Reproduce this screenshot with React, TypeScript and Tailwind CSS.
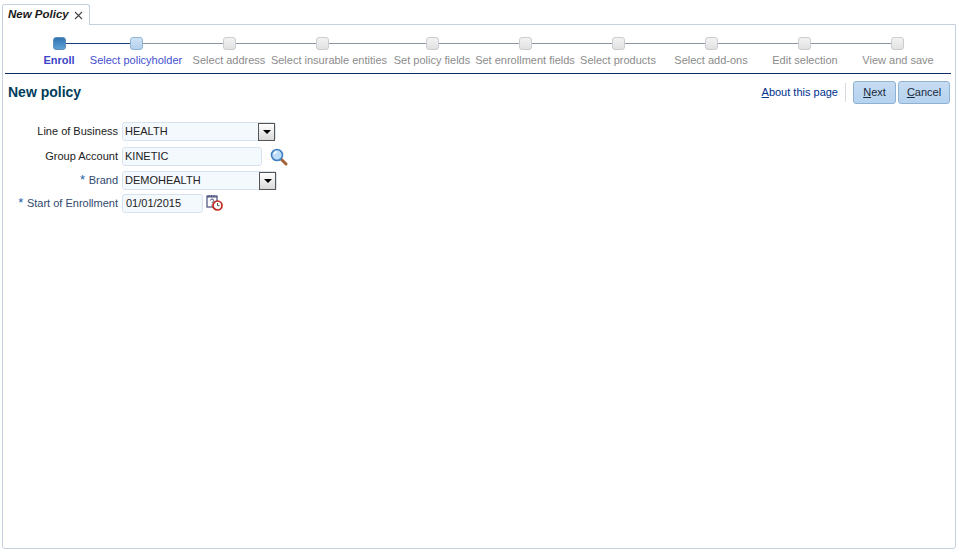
const font = "font-['Liberation_Sans',Arial,sans-serif]";

const grey = 'border-[#c9ccd0] bg-gradient-to-b from-[#f2f2f2] to-[#e2e2e2]';

// node state: done = dark blue, current = light blue, rest = grey
const steps = [
  { label: 'Enroll', line: 'w-[64px] bg-[#1c3f7c]', node: 'border-[#5f8fb8] bg-gradient-to-b from-[#2f74b0] to-[#5fa0d6]', text: 'w-[130px] ml-[-11px] text-[#3c46c8] font-bold' },
  { label: 'Select policyholder', line: 'w-[80px] bg-[#8b93a5]', node: 'border-[#90b4d4] bg-gradient-to-b from-[#cfe2f5] to-[#b3d1ee]', text: 'w-[130px] ml-[-53px] text-[#3f4fd0]' },
  { label: 'Select address', line: 'w-[80px] bg-[#8b93a5]', node: grey, text: 'w-[100px] ml-[-22px] text-[#8c8c8c]' },
  { label: 'Select insurable entities', line: 'w-[97px] bg-[#8b93a5]', node: grey, text: 'w-[130px] ml-[-15px] text-[#8c8c8c]' },
  { label: 'Set policy fields', line: 'w-[80px] bg-[#8b93a5]', node: grey, text: 'w-[100px] ml-[-12px] text-[#8c8c8c]' },
  { label: 'Set enrollment fields', line: 'w-[80px] bg-[#8b93a5]', node: grey, text: 'w-[110px] ml-[-12px] text-[#8c8c8c]' },
  { label: 'Select products', line: 'w-[80px] bg-[#8b93a5]', node: grey, text: 'w-[90px] ml-[-7px] text-[#8c8c8c]' },
  { label: 'Select add-ons', line: 'w-[80px] bg-[#8b93a5]', node: grey, text: 'w-[90px] ml-[3px] text-[#8c8c8c]' },
  { label: 'Edit selection', line: 'w-[80px] bg-[#8b93a5]', node: grey, text: 'w-[90px] ml-[4px] text-[#8c8c8c]' },
  { label: 'View and save', line: '', node: grey, text: 'w-[90px] ml-[3px] text-[#8c8c8c]' },
];

const SelectBox = ({ value, width }: { value: string; width: string }) => (
  <div className={`${width} h-[19px] flex items-center justify-between rounded-[3px] border border-[#d6e3ef] bg-[#f4f9fd] pl-[2px]`}>
    <span>{value}</span>
    <span className="flex h-[18px] w-[17px] items-center justify-center border border-[#555] bg-gradient-to-b from-white to-[#d9d9d9]">
      <span className="h-0 w-0 border-x-[4px] border-t-[4px] border-x-transparent border-t-black" />
    </span>
  </div>
);

const Label = ({ text, required }: { text: string; required?: boolean }) => (
  <div className={`w-[113px] whitespace-nowrap text-right ${required ? 'text-[#2f4a6d]' : 'text-[#222]'}`}>
    {required && <span className="text-[13px] leading-none text-[#1a5fa8]">* </span>}
    {text}
  </div>
);

const SearchIcon = () => (
  <svg width="18" height="18" viewBox="0 0 18 18">
    <line x1="10.5" y1="10.5" x2="16" y2="16" stroke="#a5623a" strokeWidth="3" strokeLinecap="round" />
    <circle cx="7" cy="7" r="5.5" fill="#bcdcf7" stroke="#3f7fc0" strokeWidth="1.6" />
    <path d="M4 6.5a3.2 3.2 0 0 1 3-2.6" fill="none" stroke="#fff" strokeWidth="1.2" />
  </svg>
);

const CalendarIcon = () => (
  <svg width="17" height="17" viewBox="0 0 17 17">
    <rect x="1" y="2" width="10" height="11" fill="#fff" stroke="#4a4f7c" strokeWidth="1.2" />
    <path d="M1 3h10M3 1v2M5.5 1v2M8 1v2" stroke="#4a4f7c" strokeWidth="1" />
    <path d="M4.5 6.5a1.6 1.6 0 1 1 2 1.6c-.5.2-.6.5-.6 1M5.9 10.5v1" fill="none" stroke="#4a4f7c" strokeWidth="1" />
    <circle cx="11.5" cy="11.5" r="4.5" fill="#fff" stroke="#c0261c" strokeWidth="1.7" />
    <path d="M11.5 9v2.7h2" fill="none" stroke="#555" strokeWidth="1" />
  </svg>
);

export default function App() {
  return (
    <div className={`${font} flex h-[552px] w-[959px] flex-col bg-white px-[2px] pt-[4px] text-[11px] text-[#222]`}>
      {/* tab */}
      <div className="relative z-10 -mb-px flex h-[21px] w-[88px] items-center gap-[5px] rounded-t-[3px] border border-b-0 border-[#c4d2e0] bg-white pl-[5px] text-[11.5px] font-bold italic text-[#1a1a1a]">
        New Policy
        <svg width="9" height="9" viewBox="0 0 9 9"><path d="M1 1l7 7M8 1l-7 7" stroke="#444" strokeWidth="1.1" /></svg>
      </div>

      <div className="mb-[3px] flex h-[525px] w-[954px] flex-col rounded-b-[3px] border border-[#c4d2e0] px-[2px]">
        {/* stepper */}
        <div className="flex items-center pl-[48px] pt-[12px]">
          {steps.map((s) => (
            <div key={s.label} className="contents">
              <div className={`h-[13px] w-[13px] shrink-0 rounded-[3px] border ${s.node}`} />
              {s.line && <div className={`h-px ${s.line}`} />}
            </div>
          ))}
        </div>
        <div className="mt-[1px] flex h-[18px] items-center whitespace-nowrap">
          {steps.map((s) => (
            <div key={s.label} className={`shrink-0 text-center ${s.text}`}>{s.label}</div>
          ))}
        </div>
        <div className="mt-[4px] h-px w-[946px] bg-[#0d2f66]" />

        {/* header */}
        <div className="flex h-[37px] items-center justify-between pl-[3px] pr-[3px]">
          <h1 className="text-[14px] font-bold text-[#003d5b]">New policy</h1>
          <div className="flex items-center">
            <a className="text-[#00308f]"><span className="underline">A</span>bout this page</a>
            <div className="mx-[7px] h-[19px] w-px bg-[#d5dbe0]" />
            <button className="h-[23px] w-[43px] rounded-[3px] border border-[#8fb2d2] bg-gradient-to-b from-[#c6dcf2] to-[#b5d2ef] text-[#1a2a3a]"><span className="underline">N</span>ext</button>
            <button className="ml-[2px] h-[23px] w-[52px] rounded-[3px] border border-[#8fb2d2] bg-gradient-to-b from-[#c6dcf2] to-[#b5d2ef] text-[#1a2a3a]"><span className="underline">C</span>ancel</button>
          </div>
        </div>

        {/* form */}
        <div className="mt-[11px] flex flex-col">
          <div className="flex items-center gap-[4px]">
            <Label text="Line of Business" />
            <SelectBox value="HEALTH" width="w-[154px]" />
          </div>
          <div className="mt-[6px] flex items-center gap-[4px]">
            <Label text="Group Account" />
            <div className="flex h-[19px] w-[140px] items-center rounded-[3px] border border-[#d6e3ef] bg-[#f4f9fd] pl-[2px]">KINETIC</div>
            <div className="ml-[4px]"><SearchIcon /></div>
          </div>
          <div className="mt-[5px] flex items-center gap-[4px]">
            <Label text="Brand" required />
            <SelectBox value="DEMOHEALTH" width="w-[155px]" />
          </div>
          <div className="mt-[4px] flex items-center gap-[4px]">
            <Label text="Start of Enrollment" required />
            <div className="flex h-[19px] w-[81px] items-center rounded-[3px] border border-[#d6e3ef] bg-[#f4f9fd] pl-[3px]">01/01/2015</div>
            <div className="mb-[2px] ml-[-1px]"><CalendarIcon /></div>
          </div>
        </div>
      </div>
    </div>
  );
}
